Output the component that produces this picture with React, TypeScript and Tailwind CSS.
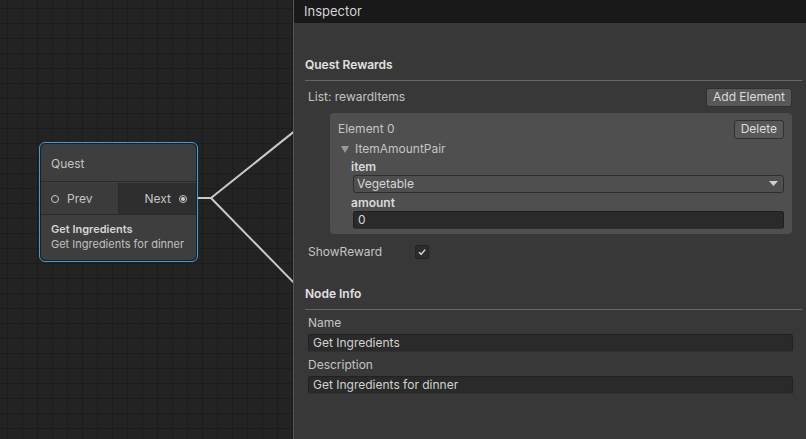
import React from 'react';

const font = { fontFamily: 'Inter, "Noto Sans", sans-serif' };

function GraphNode() {
  return (
    <div className="absolute left-[39px] top-[142px] w-[159px] h-[120px] rounded-[6px] border border-[#3a9ee0] bg-[#1f1f1f] p-px">
      <div className="flex h-full flex-col overflow-hidden rounded-[5px] bg-[#3e3e3e]">
        <div className="flex h-[38px] shrink-0 items-center border-b border-[#2a2a2a] px-[10px] pt-[3px] text-[12px] text-[#c2c2c2]">
          Quest
        </div>
        <div className="flex h-[33px] shrink-0 border-b border-[#2a2a2a] pt-px text-[12px] text-[#c4c4c4]">
          <div className="flex w-[78px] items-center gap-[8px] border-r border-[#2a2a2a] bg-[#3b3b3b] pl-[10px]">
            <span className="block h-[8px] w-[8px] rounded-full border border-[#c8c8c8]" />
            <span>Prev</span>
          </div>
          <div className="flex flex-1 items-center justify-end gap-[8px] bg-[#2e2e2e] pr-[9px]">
            <span>Next</span>
            <span className="flex h-[8px] w-[8px] items-center justify-center rounded-full border border-[#c8c8c8]">
              <span className="block h-[4px] w-[4px] rounded-full bg-[#d0d0d0]" />
            </span>
          </div>
        </div>
        <div className="flex flex-1 flex-col justify-center whitespace-nowrap px-[10px] pb-[2px] text-[11px] leading-[15px]">
          <span className="font-semibold text-[#d6d6d6]">Get Ingredients</span>
          <span className="text-[#c0c0c0]">Get Ingredients for dinner</span>
        </div>
      </div>
    </div>
  );
}

function Edges() {
  return (
    <svg className="absolute left-0 top-0 h-[439px] w-[293px]" viewBox="0 0 293 439">
      <g stroke="#c9c9c9" strokeWidth="2" fill="none" strokeLinecap="round">
        <path d="M187 198 L211 198 L296 130" />
        <path d="M211 198 L296 285" />
      </g>
    </svg>
  );
}

function SmallButton({ children }: { children: React.ReactNode }) {
  return (
    <button className="h-[19px] rounded-[3px] border border-[#303030] bg-[#585858] px-[6px] text-[12px] leading-none text-[#dcdcdc]">
      {children}
    </button>
  );
}

function SectionHeader({ title, className }: { title: string; className?: string }) {
  return (
    <div className={`border-b border-[#676767] pb-[7px] text-[12px] font-semibold leading-[16px] text-[#e2e2e2] ${className ?? ''}`}>
      {title}
    </div>
  );
}

function TextField({ value }: { value: string }) {
  return (
    <div className="flex h-[18px] items-center rounded-[3px] border border-[#212121] border-b-[#303030] bg-[#2a2a2a] px-[4px] text-[12px] text-[#d2d2d2]">
      {value}
    </div>
  );
}

function Inspector() {
  return (
    <div className="flex h-full w-[513px] flex-col border-l border-[#555] bg-[#383838]">
      <div className="flex h-[23px] items-center bg-[#191919] px-[10px] text-[13px] text-[#d4d4d4]">
        Inspector
      </div>
      <div className="flex flex-col pl-[11px] pr-[4px]">
        <SectionHeader title="Quest Rewards" className="pt-[34px] pb-[6px]" />

        <div className="mt-[7px] flex h-[18px] items-center justify-between pl-[3px] pr-[10px] text-[12px] text-[#c4c4c4]">
          <span>List: rewardItems</span>
          <SmallButton>Add Element</SmallButton>
        </div>

        <div className="ml-[25px] mr-[10px] mt-[7px] flex flex-col rounded-[4px] bg-[#4f4f4f] pb-[5px] pl-[8px] pr-[8px] pt-[6px] text-[12px]">
          <div className="flex h-[20px] items-center justify-between">
            <span className="text-[#c4c4c4]">Element 0</span>
            <SmallButton>Delete</SmallButton>
          </div>
          <div className="mt-[2px] flex h-[16px] items-center gap-[6px] pl-[3px] text-[#c4c4c4]">
            <svg width="8" height="7" viewBox="0 0 8 7">
              <path d="M0 0 L8 0 L4 7 Z" fill="#9a9a9a" />
            </svg>
            <span>ItemAmountPair</span>
          </div>
          <div className="mt-[2px] flex h-[16px] items-center pl-[13px] font-semibold text-[#dadada]">item</div>
          <div className="ml-[15px] flex h-[18px] items-center justify-between rounded-[3px] border border-[#2e2e2e] bg-[#4f4f4f] pl-[3px] pr-[5px] text-[#d6d6d6]">
            <span>Vegetable</span>
            <svg width="9" height="6" viewBox="0 0 9 6">
              <path d="M0 0 L9 0 L4.5 5 Z" fill="#d0d0d0" />
            </svg>
          </div>
          <div className="mt-[2px] flex h-[16px] items-center pl-[13px] font-semibold text-[#dadada]">amount</div>
          <div className="ml-[15px] flex h-[18px] items-center rounded-[3px] border border-[#1e1e1e] border-b-[#2e2e2e] bg-[#2a2a2a] pl-[4px] text-[#d6d6d6]">
            0
          </div>
        </div>

        <div className="mt-[9px] flex h-[18px] items-center pl-[3px] text-[12px] text-[#c4c4c4]">
          <span className="w-[107px]">ShowReward</span>
          <span className="flex h-[14px] w-[14px] items-center justify-center rounded-[2px] border border-[#222] bg-[#2c2c2c]">
            <svg width="10" height="10" viewBox="0 0 10 10">
              <path d="M2 5.2 L4.2 7.3 L8.2 2.6" stroke="#dedede" strokeWidth="1.4" fill="none" />
            </svg>
          </span>
        </div>

        <SectionHeader title="Node Info" className="pt-[25px]" />

        <div className="mt-[5px] flex flex-col pl-[3px] pr-[9px] text-[12px] text-[#c4c4c4]">
          <div className="flex h-[16px] items-center">Name</div>
          <div className="mt-[3px]">
            <TextField value="Get Ingredients" />
          </div>
          <div className="mt-[5px] flex h-[16px] items-center">Description</div>
          <div className="mt-[3px]">
            <TextField value="Get Ingredients for dinner" />
          </div>
        </div>
      </div>
    </div>
  );
}

export default function App() {
  return (
    <div className="flex h-[439px] w-[806px] overflow-hidden bg-[#222]" style={font}>
      <div className="relative h-full w-[293px] shrink-0 overflow-hidden bg-[#232323] bg-[linear-gradient(to_right,#1c1c1c_1px,transparent_1px),linear-gradient(to_bottom,#1c1c1c_1px,transparent_1px)] bg-[size:15px_15px] bg-[position:7px_8px]">
        <Edges />
        <GraphNode />
      </div>
      <Inspector />
    </div>
  );
}
